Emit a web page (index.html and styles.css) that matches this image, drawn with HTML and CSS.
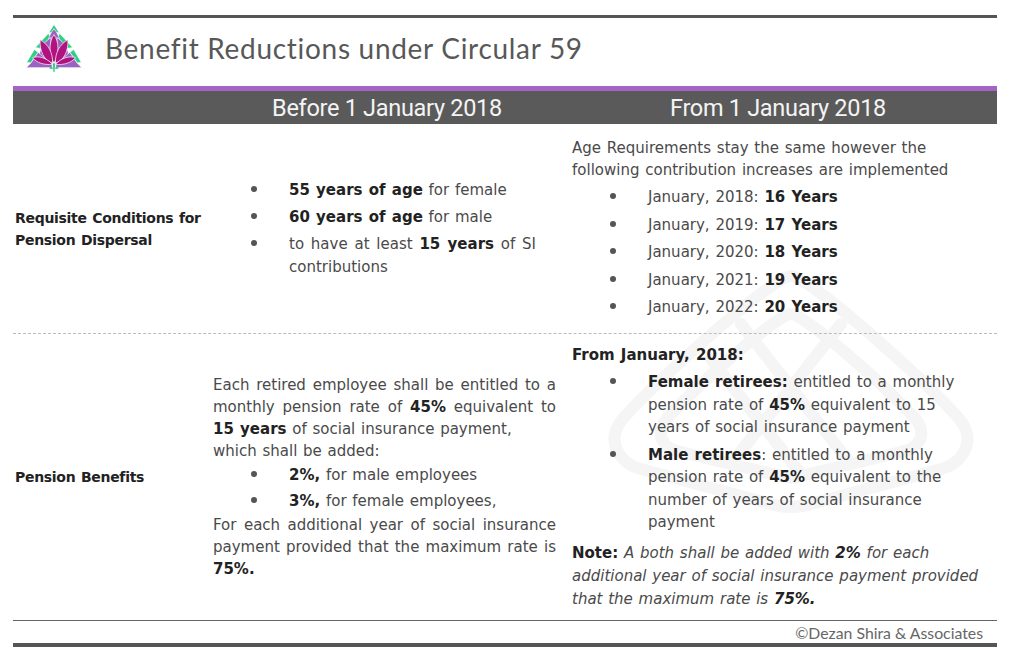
FILE: index.html
```html
<!DOCTYPE html>
<html lang="en">
<head>
<meta charset="utf-8">
<title>Benefit Reductions under Circular 59</title>
<link rel="stylesheet" href="styles.css">
</head>
<body>
<div class="page">
  <div class="rule-top"></div>
  <header class="brand">
    <svg class="logo" viewBox="0 0 58 50" width="56" height="48" aria-hidden="true">
      <g stroke="#ffffff" stroke-width="0.7" stroke-linejoin="round">
        <path d="M29 0.5 L34.5 9 L23.5 9 Z" fill="#2fcf86"/>
        <path d="M23 10 L9.5 24.5 L15 25.5 L26 14 Z" fill="#2fcf86"/>
        <path d="M35 10 L48.5 24.5 L43 25.5 L32 14 Z" fill="#2fcf86"/>
        <path d="M8.5 26.5 L0.5 40 L5 40.5 L12.5 29.5 Z" fill="#2fcf86"/>
        <path d="M49.5 26.5 L57.5 40 L53 40.5 L45.5 29.5 Z" fill="#2fcf86"/>
        <path d="M29 5 C23 12 21 21 23 32 L35 32 C37 21 35 12 29 5 Z" fill="#9a63c2"/>
        <path d="M26 14 C18 19 13 27 14 35 L25 39 Z" fill="#9a63c2"/>
        <path d="M32 14 C40 19 45 27 44 35 L33 39 Z" fill="#9a63c2"/>
        <path d="M12.5 29.5 L5 40.5 L0 45.5 L27 45.5 L27 42 C20 36 15 32 12.5 29.5 Z" fill="#9a63c2"/>
        <path d="M45.5 29.5 L53 40.5 L58 45.5 L31 45.5 L31 42 C38 36 43 32 45.5 29.5 Z" fill="#9a63c2"/>
        <path d="M29 11 C34.5 19 34.5 31 29 41 C23.5 31 23.5 19 29 11 Z" fill="#b0137f"/>
        <path d="M14.5 16.5 C23 21 28 30 27.5 41 C19 38 14 29 14.5 16.5 Z" fill="#b0137f"/>
        <path d="M43.5 16.5 C35 21 30 30 30.5 41 C39 38 44 29 43.5 16.5 Z" fill="#b0137f"/>
        <path d="M27.5 42 C21 35 13 33 6.5 35 C11 40.5 19 43 27.5 42 Z" fill="#b0137f"/>
        <path d="M30.5 42 C37 35 45 33 51.5 35 C47 40.5 39 43 30.5 42 Z" fill="#b0137f"/>
      </g>
      <path d="M27.8 41 L30.2 41 L29.6 50 L28.4 50 Z" fill="#2fcf86"/>
      <path d="M28.5 46 C26 44 24.5 44.5 24 46 C25.5 47 27 47 28.5 46 Z" fill="#2fcf86"/>
      <path d="M29.5 46 C32 44 33.5 44.5 34 46 C32.5 47 31 47 29.5 46 Z" fill="#2fcf86"/>
    </svg>
    <h1 class="title">Benefit Reductions under Circular 59</h1>
  </header>
  <div class="accent"></div>
  <div class="thead">
    <div class="th"></div>
    <div class="th th-mid">Before 1 January 2018</div>
    <div class="th th-right">From 1 January 2018</div>
  </div>
  <div class="tbody">
    <svg class="watermark" viewBox="0 0 380 260" width="380" height="260" aria-hidden="true">
      <g fill="none" stroke="#f5f5f5" stroke-width="12" stroke-linejoin="round" stroke-linecap="round">
        <path d="M190 12 C170 12 30 140 18 160 C6 180 20 200 40 205 L170 240 C182 244 198 244 210 240 L340 205 C360 200 374 180 362 160 C350 140 210 12 190 12 Z"/>
        <path d="M190 50 C175 50 70 145 62 160 C55 175 65 185 80 188 L180 212 C186 214 194 214 200 212 L300 188 C315 185 325 175 318 160 C310 145 205 50 190 50 Z"/>
        <path d="M140 60 L250 200"/>
        <path d="M110 95 L200 210"/>
        <path d="M240 60 L130 200"/>
      </g>
    </svg>

    <div class="row row-conditions">
      <div class="label">Requisite Conditions for<br>Pension Dispersal</div>
      <div class="cell mid">
        <ul class="bullets narrow">
          <li><span><b>55 years of age</b> for female</span></li>
          <li><span><b>60 years of age</b> for male</span></li>
          <li><span>to have at least <b>15 years</b> of SI contributions</span></li>
        </ul>
      </div>
      <div class="cell right top">
        <p class="lead">Age Requirements stay the same however the following contribution increases are implemented</p>
        <ul class="bullets years">
          <li><span>January, 2018: <b>16 Years</b></span></li>
          <li><span>January, 2019: <b>17 Years</b></span></li>
          <li><span>January, 2020: <b>18 Years</b></span></li>
          <li><span>January, 2021: <b>19 Years</b></span></li>
          <li><span>January, 2022: <b>20 Years</b></span></li>
        </ul>
      </div>
    </div>

    <div class="divider"></div>

    <div class="row row-benefits">
      <div class="label">Pension Benefits</div>
      <div class="cell mid">
        <p class="just">Each retired employee shall be entitled to a monthly pension rate of <b>45%</b> equivalent to <b>15 years</b> of social insurance payment,<br>which shall be added:</p>
        <ul class="bullets rates">
          <li><span><b>2%,</b> for male employees</span></li>
          <li><span><b>3%,</b> for female employees,</span></li>
        </ul>
        <p class="just">For each additional year of social insurance payment provided that the maximum rate is <b>75%.</b></p>
      </div>
      <div class="cell right top2">
        <p class="sub"><b>From January, 2018:</b></p>
        <ul class="bullets retirees">
          <li><span><b>Female retirees:</b> entitled to a monthly pension rate of <b>45%</b> equivalent to 15 years of social insurance payment</span></li>
          <li><span><b>Male retirees</b>: entitled to a monthly pension rate of <b>45%</b> equivalent to the number of years of social insurance payment</span></li>
        </ul>
        <p class="note"><b>Note:</b> <i>A both shall be added with <b>2%</b> for each additional year of social insurance payment provided that the maximum rate is <b>75%.</b></i></p>
      </div>
    </div>
  </div>
  <footer class="footer">
    <div class="credit">©Dezan Shira &amp; Associates</div>
  </footer>
</div>
</body>
</html>
```

FILE: styles.css
```css
* { box-sizing: border-box; }

html, body {
  margin: 0;
  padding: 0;
  background: #ffffff;
}

body {
  font-family: "DejaVu Sans", "Liberation Sans", sans-serif;
  font-size: 15px;
  word-spacing: 1px;
  color: #4a4a4a;
}

.page {
  width: 984px;
  margin: 15px 0 0 13px;
}

.rule-top {
  height: 3px;
  background: #555555;
}

.brand {
  height: 68px;
  display: flex;
  align-items: center;
  gap: 23px;
  padding-left: 13px;
  padding-bottom: 8px;
}

.logo {
  display: block;
  flex: none;
}

.title {
  margin: 0;
  font-family: Lato, "Open Sans", sans-serif;
  font-weight: 400;
  font-size: 28px;
  letter-spacing: 0.7px;
  word-spacing: 0;
  color: #585858;
}

.accent {
  height: 5px;
  background: #a464c6;
}

.thead {
  display: grid;
  grid-template-columns: 200px 359px 1fr;
  height: 33px;
  background: #5a5a5a;
}

.th {
  display: flex;
  align-items: center;
  justify-content: center;
  font-family: Roboto, "Liberation Sans", sans-serif;
  font-size: 23.5px;
  word-spacing: 0;
  color: #f4f4f4;
  letter-spacing: -0.3px;
}

.th-mid { padding-right: 11px; }
.th-right { padding-right: 13px; }

.tbody {
  position: relative;
}

.watermark {
  position: absolute;
  left: 588px;
  top: 140px;
  z-index: 0;
}

.row {
  position: relative;
  z-index: 1;
  display: grid;
  grid-template-columns: 200px 359px 1fr;
}

.row-conditions { min-height: 209px; }
.row-benefits { min-height: 286px; }

.label {
  align-self: center;
  padding-left: 2px;
  font-size: 14px;
  font-weight: bold;
  letter-spacing: -0.3px;
  word-spacing: 1px;
  color: #222222;
  line-height: 22px;
}

.cell {
  line-height: 22px;
}

.mid {
  align-self: center;
  padding-right: 16px;
}

.right {
  padding-right: 8px;
}

.right.top { padding-top: 13px; padding-bottom: 12px; }
.right.top2 { padding-top: 10px; padding-bottom: 9px; }

p { margin: 0; }

b { color: #222222; }

.just { text-align: justify; }

.bullets {
  list-style: none;
  margin: 0 0 0 38px;
  padding: 0;
}

.bullets li {
  display: grid;
  grid-template-columns: 38px 1fr;
}

.bullets li::before {
  content: "";
  width: 6px;
  height: 6px;
  border-radius: 50%;
  background: #555555;
  margin-top: 7px;
}

.narrow { margin-right: 20px; }
.narrow li { line-height: 23px; margin-bottom: 4px; text-align: justify; }
.narrow li:last-child { margin-bottom: 0; }

.years li { margin-top: 5px; line-height: 22.5px; }

.rates li { padding: 2px 0; }

.retirees { margin-right: 22px; }
.retirees li { margin-top: 5px; line-height: 22.5px; }

.note { margin-top: 8px; line-height: 23px; }

.divider {
  position: relative;
  z-index: 1;
  border-top: 1px dashed #bbbbbb;
}

.footer {
  border-top: 1px solid #666666;
  border-bottom: 4px solid #555555;
  height: 27px;
  display: flex;
  align-items: center;
  justify-content: flex-end;
  padding-right: 14px;
}

.credit {
  font-family: Lato, "Open Sans", sans-serif;
  font-size: 15.8px;
  word-spacing: 0;
  color: #666666;
}
```
